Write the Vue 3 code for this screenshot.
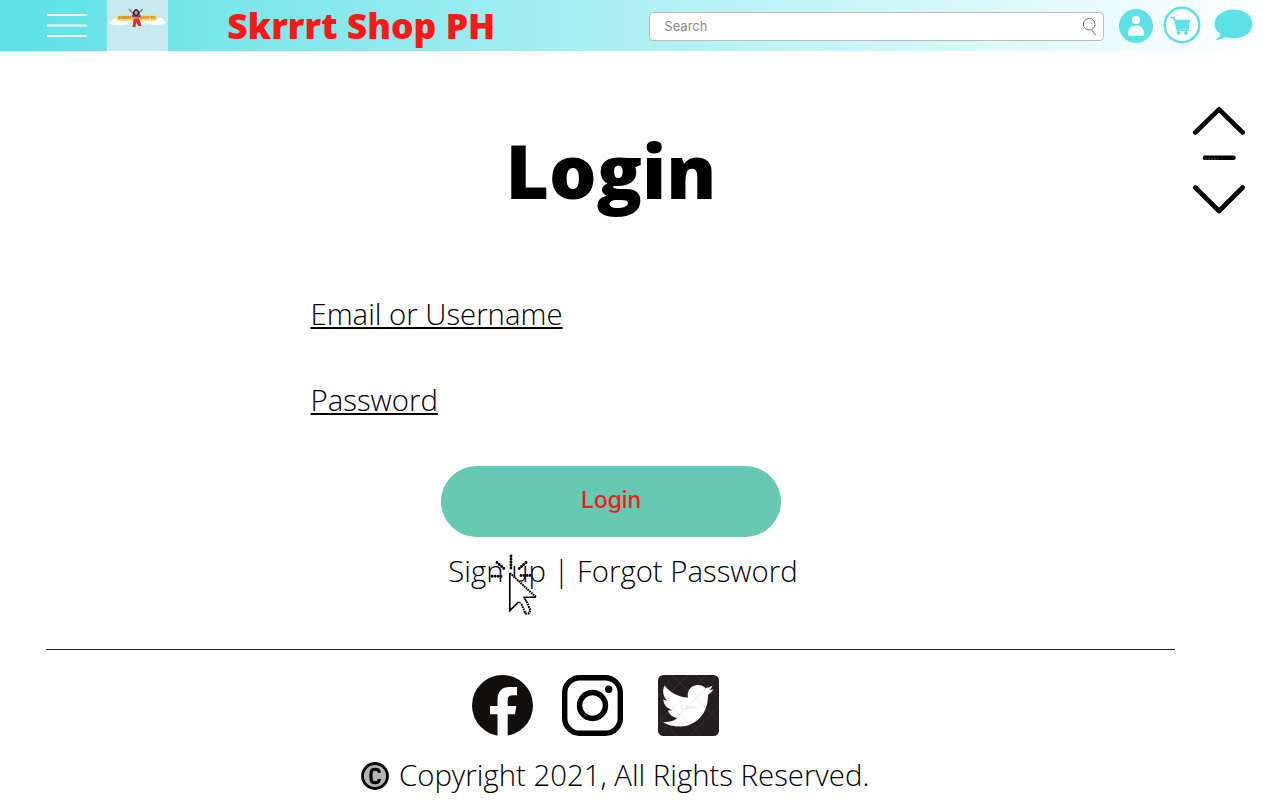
<script setup>
const socials = ['facebook', 'instagram', 'twitter']
</script>

<template>
  <div class="page">
    <header class="bar">
      <svg class="menu" viewBox="0 0 40 26" width="40" height="26">
        <path d="M0 2H39.5M0 12.5H39.5M0 23H39.5" stroke="#fff" stroke-width="2" />
      </svg>
      <svg class="logo" viewBox="0 0 61 51.300" width="61" height="51.300">
        <rect width="61" height="51.300" fill="#c8e9ee" />
        <g fill="#f8fdfe">
          <ellipse cx="12" cy="22.8" rx="10" ry="2.7" /><ellipse cx="10" cy="20.5" rx="5" ry="2.2" />
          <ellipse cx="49" cy="22.4" rx="10" ry="2.6" /><ellipse cx="52" cy="20" rx="5" ry="2.2" />
          <ellipse cx="30" cy="22.5" rx="13" ry="3" opacity=".5" />
        </g>
        <rect x="9.5" y="15.6" width="40.5" height="5" rx="2.3" fill="#f8d150" />
        <path d="M22 9l4 4.500M35.500 9l-4 4.500" stroke="#80719d" stroke-width="1.2" />
        <path d="M26 12q3-6 6.500 0v5h-6.500z" fill="#281927" />
        <rect x="27.700" y="10.800" width="3" height="4" rx="1.400" fill="#d99a91" />
        <path d="M25 14.500h2l2.300 2 2.300-2h2v3h-8.500z" fill="#8a3e7c" />
        <path d="M26.800 18.500h5.200l2.700 7.500h-3.500l-2-4-.7 5h-3z" fill="#e52c22" />
        <text x="11.500" y="19.300" class="logo-text" textLength="13" lengthAdjust="spacingAndGlyphs">SKRRRT</text>
        <text x="33.500" y="19.300" class="logo-text" textLength="14.500" lengthAdjust="spacingAndGlyphs">SHOP PH</text>
      </svg>
      <div class="brand">Skrrrt Shop PH</div>
      <div class="search">
        <span>Search</span>
        <svg viewBox="0 0 16 20" width="16" height="20" fill="none" stroke="#777" stroke-width="1">
          <circle cx="7.200" cy="7.200" r="5.800" /><path d="M9.500 12.500L13.800 18.500" />
        </svg>
      </div>
      <svg class="user" viewBox="0 0 34 34" width="34" height="34">
        <circle cx="17" cy="17" r="17" fill="#5ce1e6" />
        <circle cx="17" cy="11" r="4.100" fill="#fff" />
        <path d="M9 25.500C9 19.500 12 16.600 17 16.600S25.200 19.500 25.200 25.500Q25.200 27 23.700 27H10.500Q9 27 9 25.500Z" fill="#fff" />
      </svg>
      <svg class="cart" viewBox="0 0 38 38" width="38" height="38">
        <circle cx="19" cy="19" r="17.300" fill="#fdffff" stroke="#5ce1e6" stroke-width="2.500" />
        <path d="M7.500 11.500H11L14.500 24.300H26" fill="none" stroke="#5ce1e6" stroke-width="1.500" />
        <path d="M11.500 13.800H27.200L25.700 23.500H14Z" fill="#5ce1e6" />
        <circle cx="15.700" cy="27" r="1.900" fill="#5ce1e6" /><circle cx="23" cy="27" r="1.900" fill="#5ce1e6" />
      </svg>
      <svg class="chat" viewBox="0 0 40 32" width="40" height="32">
        <path d="M20 .5C30.500.5 38.500 6.800 38.500 15S30.500 29.300 20 29.300C17 29.300 14.200 28.800 11.700 28 8.500 30 5 31 1 31 4 29.500 6 27.500 6.500 25.300 3 22.500.5 19 .5 15 .5 6.800 9.500.5 20 .5Z" fill="#5ce1e6" />
      </svg>
    </header>

    <main class="content">
      <svg class="scroller" viewBox="0 0 54 108" width="54" height="108" fill="none" stroke="#000" stroke-width="4.600" stroke-linecap="round" stroke-linejoin="round">
        <path d="M3.300 26.500L27 3.300 50.700 26.500M3.300 81.500L27 105 50.700 81.500" />
        <path d="M13 51.700H41.500" />
        <path d="M13 53h13" stroke="#777" stroke-width=".8" stroke-dasharray="2 1" stroke-linecap="butt" />
      </svg>
      <h1>Login</h1>
      <div class="field email"><span>Email or Username</span></div>
      <div class="field password"><span>Password</span></div>
      <button class="submit">Login</button>
      <div class="links">
        <span>Sign up | Forgot Password</span>
        <svg class="pointer" viewBox="488 552 52 66" width="52" height="66" fill="none" stroke="#000">
          <g stroke-width="2.900" stroke-linecap="round" stroke-dasharray="0 3">
            <path d="M511 556V569M492 576.200H503.500M521 575.500H532.500M497 562.500L504.500 569M526 562.500L518 569.500" />
          </g>
          <path d="M510 573L536 597 524.500 598.500 526.500 602 530.500 610.500 527.500 613.500 525 612.500 521 603 518 602.500 510 610Z" fill="#fff" stroke="none" />
          <path d="M510 573L536 597" stroke-width="2" stroke-dasharray="1.700 .7" />
          <path d="M509.800 573V610.500L518 602.500H520.500" stroke-width="1.700" />
          <path d="M536 597.300H524L526.500 601.500" stroke-width="1.600" />
          <path d="M526.500 601.500L530.500 610.500 528.500 613.500H525.500L521 603" stroke-width="2.100" stroke-dasharray="1.800 .7" />
        </svg>
      </div>
    </main>

    <footer class="footer">
      <div class="socials">
        <svg v-for="name in socials" :key="name" :class="name" viewBox="0 0 61 61" width="61" height="61">
          <template v-if="name === 'facebook'">
            <circle cx="30.500" cy="30.500" r="30.500" fill="#100f0d" />
            <path d="M25.500 61V39.300H18V31H25.500V25C25.500 16.500 30 12 37.500 12H45V20.300H40.500C37 20.300 35.700 22 35.700 25V31H44.300L43 39.300H35.700V61Z" fill="#fff" />
          </template>
          <template v-else-if="name === 'instagram'">
            <rect x="2.700" y="2.700" width="55.600" height="55.600" rx="15" fill="none" stroke="#000" stroke-width="5.400" />
            <circle cx="30.500" cy="30.500" r="13" fill="none" stroke="#000" stroke-width="5.400" />
            <circle cx="46.700" cy="14.300" r="3.700" />
          </template>
          <template v-else>
            <rect width="61" height="61" rx="5.500" fill="#231f20" />
            <path d="M6.500 10.500C12 17.500 20 22 30 22.500 28.500 15.500 33.500 10 40 10 43 10 45.500 11.200 47.500 13 50 12.600 52.500 11.700 54.500 10.400 53.800 12.700 52.500 14 51.300 15L55.500 14.500C54 16.800 52 18.500 50 20 50.500 38 38 51.500 22 51.500 15.500 51.500 9.500 50 5 47 11 47.500 16 46 19.500 43 15 42.500 11.500 40 10 35.500L14.500 35.300C9 33.500 5.500 29.500 5.300 24.500L9.500 25.700C5 22 4 15.500 6.500 10.500Z" fill="#fff" />
            <path d="M-8 38L31 -1M0 61L61 0M19 73L73 19M-8 10L56 74M10 -4L73 59M34 -4L65 27M-10 58L50 -2M-8 34L25 67" stroke="#8b898a" stroke-width=".5" opacity=".3" />
            <text x="23" y="33.500" class="mark">Canva</text>
          </template>
        </svg>
      </div>
      <div class="copyright">
        <svg viewBox="0 0 28 28" width="28" height="28">
          <circle cx="14" cy="14" r="12.500" fill="#b3b3b3" stroke="#000" stroke-width="2.800" />
          <path d="M18.300 10.800V10.500C18.300 8 16.500 7.300 14.200 7.300S10 8.500 10 11V17C10 19.500 11.900 20.700 14.200 20.700S18.300 19.500 18.300 17.300V17" fill="none" stroke="#000" stroke-width="3.100" />
        </svg>
        <span>Copyright 2021, All Rights Reserved.</span>
      </div>
    </footer>
  </div>
</template>

<style>
body { margin: 0; background: #fff; }
</style>

<style scoped>
.page { width: 1280px; height: 800px; overflow: hidden; font-family: "Open Sans", sans-serif; color: #000; }
.bar { height: 51.3px; display: flex; align-items: flex-start; background: linear-gradient(90deg, #5ce1e6 0, #fff 1263px); }
.bar svg { flex: none; display: block; }
.menu { margin: 12.500px 0 0 46.800px; }
.logo { margin-left: 20px; }
.logo-text { font: 700 4px "Open Sans", sans-serif; fill: #ce682f; }
.brand { width: 422px; margin-left: 59.500px; box-sizing: border-box; color: #ff1616; font-size: 35.500px; line-height: 50px; font-weight: 800; white-space: nowrap; }
.search { flex: none; box-sizing: border-box; width: 455px; height: 29px; margin: 12px 0 0 -.5px; padding: 0 5px 0 14.500px; border: 1px solid #b9bcbd; border-radius: 4px; background: #fff; display: flex; align-items: center; justify-content: space-between; color: #8b8b8b; font: 13px Inter, sans-serif; }
.search span { position: relative; top: -1px; }
.user { margin: 9px 0 0 15.200px; }
.cart { margin: 6px 0 0 10px; }
.chat { margin: 9px 0 0 13px; }
.content { height: 597.700px; position: relative; }
.scroller { position: absolute; left: 1191.800px; top: 54.700px; }
h1 { margin: 0 0 0 505.500px; padding-top: 69px; font-size: 74.800px; line-height: 100px; font-weight: 800; width: 220px; }
.field { margin-left: 310.500px; font-size: 29.350px; line-height: 40px; font-weight: 300; }
.field span { text-decoration: underline; text-decoration-thickness: 2px; text-underline-offset: 2px; text-decoration-skip-ink: none; }
.email { margin-top: 74px; }
.password { margin-top: 46px; }
.submit { display: block; width: 339.500px; height: 71px; margin: 45.800px 0 0 441.400px; padding: 0 0 4px; border: 0; border-radius: 36px; background: #66c9b3; color: #ff1616; font: 500 22.800px Inter, sans-serif; }
.links { position: relative; margin: 13.700px 0 0 448.300px; font-size: 29.350px; line-height: 40px; font-weight: 300; width: 360px; white-space: nowrap; }
.pointer { position: absolute; left: 40px; top: 1.300px; }
.footer { margin-left: 46.400px; width: 1129px; border-top: 1.300px solid #222; }
.socials { display: flex; margin: 25px 0 0 425.500px; }
.instagram { margin-left: 29.600px; }
.twitter { margin-left: 35px; }
.mark { font: 6px "Liberation Serif", serif; fill: #ddd; }
.copyright { display: flex; align-items: center; gap: 10px; margin: 19.700px 0 0 314.600px; font-size: 29.350px; line-height: 40px; font-weight: 300; white-space: nowrap; }
.copyright span { position: relative; top: -1px; }
</style>
